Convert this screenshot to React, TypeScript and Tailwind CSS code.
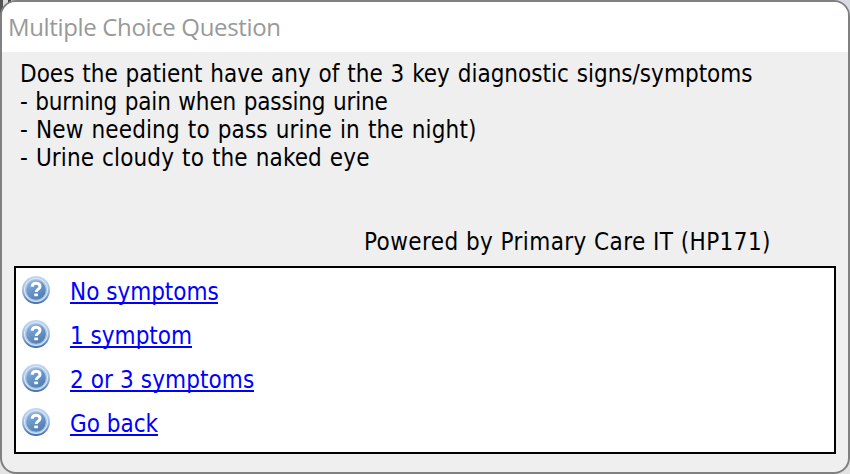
interface Line {
  text: string;
  className: string;
}

const questionLines: Line[] = [
  { text: 'Does the patient have any of the 3 key diagnostic signs/symptoms', className: 'tracking-[0px]' },
  { text: '- burning pain when passing urine', className: 'tracking-[-0.17px]' },
  { text: '- New needing to pass urine in the night)', className: 'tracking-[0.14px]' },
  { text: '- Urine cloudy to the naked eye', className: 'tracking-[0.12px]' },
];

const answers: Line[] = [
  { text: 'No symptoms', className: 'w-[148px] tracking-[-0.02px]' },
  { text: '1 symptom', className: 'w-[122px] tracking-[0px]' },
  { text: '2 or 3 symptoms', className: 'w-[184px] tracking-[0.1px]' },
  { text: 'Go back', className: 'w-[88px] tracking-[0px]' },
];

function HelpIcon() {
  return (
    <svg viewBox="0 0 28 28" className="h-7 w-7 shrink-0">
      <defs>
        <linearGradient id="ring" x1="0" y1="0" x2="0" y2="1">
          <stop offset="0" stopColor="#c3d9f3" />
          <stop offset="0.5" stopColor="#a3bfe0" />
          <stop offset="1" stopColor="#3f6fae" />
        </linearGradient>
        <linearGradient id="disc" x1="0" y1="0" x2="0.6" y2="1">
          <stop offset="0" stopColor="#94b8df" />
          <stop offset="0.5" stopColor="#6b98c9" />
          <stop offset="1" stopColor="#5280b4" />
        </linearGradient>
      </defs>
      <circle cx="14" cy="14" r="14" fill="url(#ring)" />
      <circle cx="14" cy="14" r="12" fill="#dbe7f5" />
      <circle cx="14" cy="14" r="11" fill="#adc6e3" />
      <circle cx="14" cy="14" r="9.8" fill="url(#disc)" />
      <path d="M10.2 10.8C10.3 8.3 11.8 7.2 14 7.2C16.6 7.2 18 8.5 18 10.5C18 13.1 14.4 13.2 14.2 16" fill="none" stroke="#fff" strokeWidth="3" />
      <rect x="12.2" y="17.6" width="3.8" height="2.6" fill="#fff" />
    </svg>
  );
}

export default function App() {
  return (
    <div className="h-[474px] w-[850px] overflow-hidden bg-[#e4e4e4] bg-[linear-gradient(90deg,#555_0_3px,#ddd_3px_8px,#444_8px_11px,#d8dce2_11px)] bg-[length:100%_16px] bg-no-repeat">
      <div className="flex h-full flex-col overflow-hidden rounded-[16px] border-2 border-[#808080] bg-[#efefef]">
        <header className="flex h-[50px] shrink-0 items-center bg-white pl-[6px]">
          <h1 className="whitespace-nowrap font-['Open_Sans',sans-serif] text-[24px] leading-[50px] tracking-[-0.35px] text-[#999999]">
            Multiple Choice Question
          </h1>
        </header>

        <main className="flex flex-1 flex-col px-3 pt-2 font-['DejaVu_Sans_Condensed','DejaVu_Sans',sans-serif] text-[24px] leading-7 text-black [font-stretch:75%]">
          <div className="pl-[6px] [word-spacing:1px]">
            {questionLines.map((line) => (
              <p key={line.text} className="h-7 whitespace-nowrap">
                <span className={line.className}>{line.text}</span>
              </p>
            ))}
          </div>

          <p className="mt-14 h-7 whitespace-nowrap pl-[350px]">
            <span className="tracking-[0.42px]">Powered by Primary Care IT (HP171)</span>
          </p>

          <ul className="mt-[10px] h-[188px] w-[822px] border-2 border-black bg-white pl-[6px] pt-[8px]">
            {answers.map((answer) => (
              <li key={answer.text} className="flex h-11 items-start">
                <HelpIcon />
                <a
                  href="#"
                  className={`ml-5 block h-7 whitespace-nowrap border-b-2 border-[#0000ff] leading-8 text-[#0000ff] ${answer.className}`}
                >
                  {answer.text}
                </a>
              </li>
            ))}
          </ul>
        </main>
      </div>
    </div>
  );
}
